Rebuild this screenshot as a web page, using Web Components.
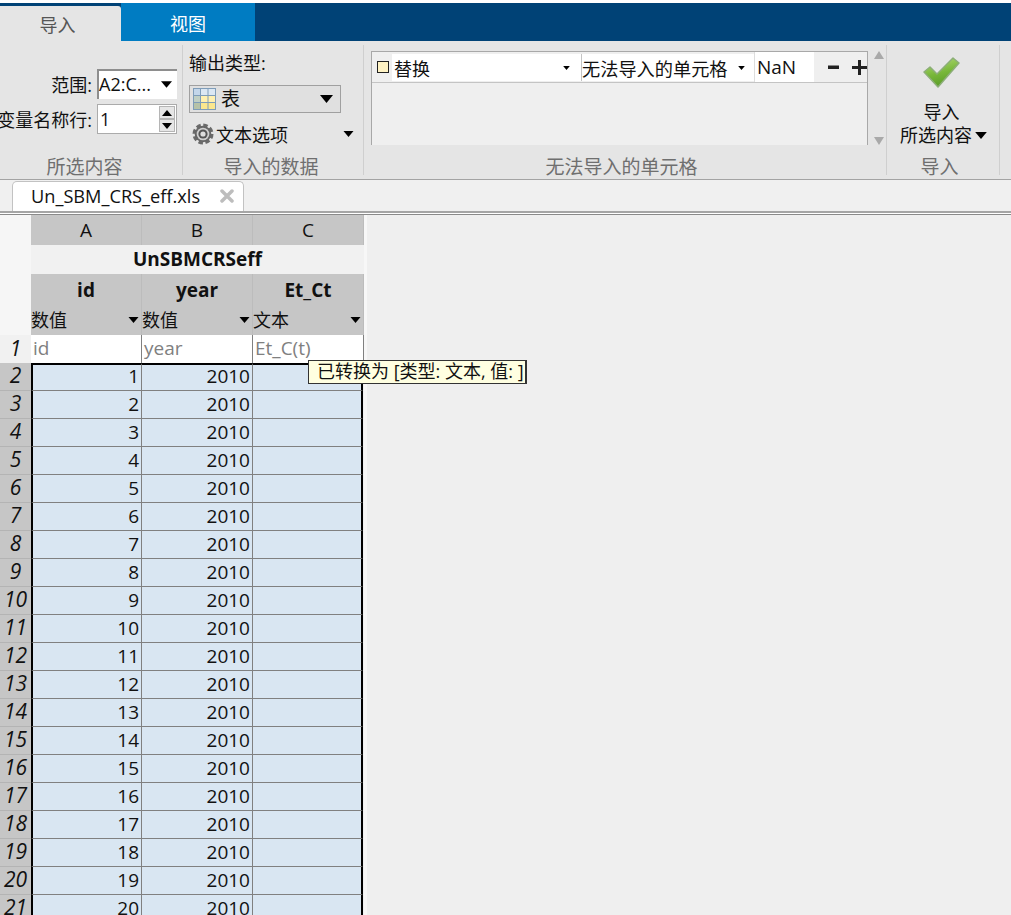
<!DOCTYPE html>
<html lang="zh">
<head>
<meta charset="utf-8">
<title>导入</title>
<style>
  html, body { margin: 0; height: 915px; overflow: hidden; background: #fff; }
  body { font-family: "Open Sans", "Noto Sans CJK SC", sans-serif; font-size: 18px; color: #111; }
</style>
</head>
<body>
<app-tabs></app-tabs>
<app-ribbon>
  <ribbon-group label="所选内容" style="width:183px;--label-pad:14px"><selection-panel></selection-panel></ribbon-group>
  <ribbon-group label="导入的数据" style="width:181px;--label-pad:5px"><output-panel></output-panel></ribbon-group>
  <ribbon-group label="无法导入的单元格" style="width:523px;--label-pad:8px"><rules-panel></rules-panel></ribbon-group>
  <ribbon-group label="导入" style="width:113px;--label-pad:8px"><import-button></import-button></ribbon-group>
</app-ribbon>
<file-strip name="Un_SBM_CRS_eff.xls"></file-strip>
<import-sheet></import-sheet>

<script>
const caret = (w, h) =>
  `<svg width="${w}" height="${h}" viewBox="0 0 10 6" aria-hidden="true"><path d="M0 0h10L5 6z" fill="#000"/></svg>`;

function define(tag, html) {
  const template = document.createElement("template");
  template.innerHTML = html;
  customElements.define(tag, class extends HTMLElement {
    constructor() {
      super();
      this.attachShadow({ mode: "open" });
      this.shadowRoot.appendChild(template.content.cloneNode(true));
    }
  });
}

define("app-tabs", `
  <style>
    :host { display: flex; height: 38px; margin-top: 3px; background: #004276; }
    div { display: flex; align-items: center; justify-content: center; box-sizing: border-box; }
    .on { width: 121px; margin-top: 3px; background: #e5e5e5; color: #555; border-top-right-radius: 3px; padding-right: 6px; }
    .off { width: 134px; background: #007cc2; color: #fff; padding-top: 2px; }
  </style>
  <div class="on">导入</div>
  <div class="off">视图</div>
`);

define("app-ribbon", `
  <style>
    :host { display: flex; height: 138px; background: #e5e5e5; border-bottom: 1px solid #a3a3a3; }
  </style>
  <slot></slot>
`);

class RibbonGroup extends HTMLElement {
  constructor() {
    super();
    this.attachShadow({ mode: "open" });
    this.shadowRoot.innerHTML = `
      <style>
        :host {
          display: block; box-sizing: border-box; height: 134px; margin-top: 4px;
          background: linear-gradient(#cfcfcf, #cfcfcf) right top / 1px 130px no-repeat;
          overflow: hidden;
        }
        .body { height: 111px; }
        .label { height: 22px; line-height: 22px; text-align: center; color: #6f6f6f; font-size: 19px; padding-right: var(--label-pad, 0); white-space: nowrap; }
      </style>
      <div class="body"><slot></slot></div>
      <div class="label"></div>`;
    this.shadowRoot.querySelector(".label").textContent = this.getAttribute("label");
  }
}
customElements.define("ribbon-group", RibbonGroup);

define("selection-panel", `
  <style>
    :host { display: flex; flex-direction: column; gap: 5px; padding: 24px 6px 0 0; }
    .row { display: flex; justify-content: flex-end; align-items: center; gap: 5px; height: 30px; white-space: nowrap; }
    .row span { flex-shrink: 0; }
    .box { box-sizing: border-box; width: 80px; height: 30px; flex-shrink: 0; background: #fff; display: flex; align-items: center; padding-left: 2px; }
    .range { border-top: 2px solid #8e8e8e; border-left: 2px solid #8e8e8e; justify-content: space-between; padding: 0 5px 2px 0; }
    .spin { border: 1px solid #ababab; padding: 0 0 0 2px; justify-content: space-between; }
    .arrows { display: flex; flex-direction: column; gap: 0; width: 16px; height: 26px; margin-right: 1px; }
    .arrows i { flex: 1; display: flex; align-items: center; justify-content: center; background: #e6e6e6; border: 1px solid #b5b5b5; }
  </style>
  <div class="row"><span>范围:</span><div class="box range"><span>A2:C...</span>${caret(11, 7)}</div></div>
  <div class="row"><span>变量名称行:</span><div class="box spin"><span>1</span>
    <div class="arrows"><i><svg width="10" height="6" viewBox="0 0 10 6"><path d="M0 6h10L5 0z"/></svg></i><i>${caret(10, 6)}</i></div>
  </div></div>
`);

define("output-panel", `
  <style>
    :host { display: block; padding: 5px 0 0 6px; }
    .title { height: 26px; line-height: 26px; margin-bottom: 9px; }
    .combo { box-sizing: border-box; width: 152px; height: 28px; border: 1px solid #a0a0a0; background: #e0e0e0; display: flex; align-items: center; padding: 0 7px 0 3px; }
    .combo svg:first-child { margin-right: 5px; }
    .combo b { font-weight: 400; flex: 1; font-size: 19px; padding-bottom: 2px; }
    .opts { display: flex; align-items: center; height: 26px; margin-top: 8px; padding-left: 3px; width: 162px; }
    .opts span { flex: 1; margin-left: 2px; }
  </style>
  <div class="title">输出类型:</div>
  <div class="combo">
    <svg width="23" height="22" viewBox="0 0 23 22" aria-hidden="true">
      <rect width="23" height="22" fill="#7f9db9"/>
      <rect x="1" y="1" width="6" height="6" fill="#c3d6ea"/><rect x="8" y="1" width="6.500" height="6" fill="#dbe7f3"/><rect x="15.500" y="1" width="6.500" height="6" fill="#dbe7f3"/>
      <rect x="1" y="8" width="6" height="6" fill="#c0cfc4"/><rect x="8" y="8" width="6.500" height="6" fill="#fff0b0"/><rect x="15.500" y="8" width="6.500" height="6" fill="#fff0b0"/>
      <rect x="1" y="15" width="6" height="6" fill="#b6c2a8"/><rect x="8" y="15" width="6.500" height="6" fill="#fbe78e"/><rect x="15.500" y="15" width="6.500" height="6" fill="#fbe78e"/>
    </svg>
    <b>表</b>${caret(13, 8)}
  </div>
  <div class="opts">
    <svg width="22" height="22" viewBox="0 0 22 22" aria-hidden="true">
      <circle cx="11" cy="11" r="9" fill="none" stroke="#6a6a6a" stroke-width="3" stroke-dasharray="4.500 2.570"/>
      <circle cx="11" cy="11" r="8.300" fill="#666"/>
      <circle cx="11" cy="11" r="6.300" fill="#cfcfcf"/>
      <circle cx="11" cy="11" r="4.600" fill="#555"/>
      <circle cx="11" cy="11" r="2.600" fill="#dedede"/>
    </svg>
    <span>文本选项</span>${caret(11, 6)}
  </div>
`);

define("rules-panel", `
  <style>
    :host { display: flex; padding: 6px 0 0 7px; gap: 0; }
    .panel { box-sizing: border-box; width: 497px; height: 94px; border: 1px solid #a8a8a8; border-bottom: 0; background: #efefef; }
    .row { display: flex; height: 31px; box-sizing: border-box; border-bottom: 1px solid #c4c4c4; align-items: stretch; }
    .swatch { width: 20px; box-sizing: border-box; padding-left: 5px; display: flex; align-items: center; }
    .swatch i { display: block; box-sizing: border-box; width: 12px; height: 12px; background: #fff3c4; border: 1px solid #222; }
    .cell { background: #fff; margin: 2px 0 1px; display: flex; align-items: center; white-space: nowrap; }
    .rule { width: 190px; justify-content: space-between; padding: 0 11px 0 2px; box-sizing: border-box; border-right: 1px solid #c4c4c4; }
    .what { width: 172px; justify-content: space-between; padding-right: 9px; box-sizing: border-box; font-size: 18.200px; }
    .nan { width: 60px; margin: 0; padding-left: 2px; box-sizing: border-box; border-left: 1px solid #ddd; font-size: 19px; }
    .ops { flex: 1; display: flex; align-items: center; justify-content: flex-end; gap: 12px; }
    .scroll { width: 18px; display: flex; flex-direction: column; justify-content: space-between; align-items: center; height: 94px; padding-left: 3px; box-sizing: border-box; }
  </style>
  <div class="panel">
    <div class="row">
      <div class="swatch"><i></i></div>
      <div class="cell rule"><span>替换</span>${caret(7, 4)}</div>
      <div class="cell what"><span>无法导入的单元格</span>${caret(7, 4)}</div>
      <div class="cell nan">NaN</div>
      <div class="ops">
        <svg width="13" height="14" viewBox="0 0 13 14" aria-hidden="true"><path d="M1 5.500h11v3.500H1z" fill="#222"/></svg>
        <svg width="15" height="15" viewBox="0 0 15 15" aria-hidden="true"><path d="M6 0h3v6h6v3H9v6H6V9H0V6h6z" fill="#222"/></svg>
      </div>
    </div>
  </div>
  <div class="scroll">
    <svg width="10" height="8" viewBox="0 0 10 8"><path d="M0 8h10L5 0z" fill="#a9a9a9"/></svg>
    <svg width="10" height="8" viewBox="0 0 10 8"><path d="M0 0h10L5 8z" fill="#a9a9a9"/></svg>
  </div>
`);

define("import-button", `
  <style>
    :host { display: flex; flex-direction: column; align-items: center; padding: 12px 4px 0 0; line-height: 23px; }
    svg.tick { margin-bottom: 13px; display: block; }
    .more { display: flex; align-items: center; gap: 3px; margin-left: 4px; }
  </style>
  <svg class="tick" width="37" height="31" viewBox="0 0 37 31" aria-hidden="true">
    <defs><linearGradient id="g" x1="0" y1="0" x2="0.300" y2="1"><stop offset="0" stop-color="#b9dd7c"/><stop offset="0.600" stop-color="#78b73a"/><stop offset="1" stop-color="#5d9f2a"/></linearGradient></defs>
    <path d="M1 15l6-5 7 7L30 1l6 5-21 24z" fill="url(#g)" stroke="#8cae78" stroke-width="1.500" stroke-linejoin="round"/>
  </svg>
  <div>导入</div>
  <div class="more">所选内容${caret(12, 7)}</div>
`);

class FileStrip extends HTMLElement {
  constructor() {
    super();
    this.attachShadow({ mode: "open" });
    this.shadowRoot.innerHTML = `
      <style>
        :host { display: flex; box-sizing: border-box; height: 33px; padding: 1px 0 0 12px; background: #f0f0f0; border-bottom: 2px solid #a5a5a5; }
        .tab { box-sizing: border-box; width: 232px; height: 30px; background: #fff; border: 1px solid #c2c2c2; border-bottom: 0; border-radius: 5px 5px 0 0; display: flex; align-items: center; padding: 0 9px 2px 18px; justify-content: space-between; font-size: 18.200px; }
      </style>
      <div class="tab"><span></span>
        <svg width="14" height="14" viewBox="0 0 14 14" aria-hidden="true"><path d="M2 2l10 10M12 2L2 12" stroke="#bdbdbd" stroke-width="3.500" stroke-linecap="round"/></svg>
      </div>`;
    this.shadowRoot.querySelector("span").textContent = this.getAttribute("name");
  }
}
customElements.define("file-strip", FileStrip);

class ImportSheet extends HTMLElement {
  constructor() {
    super();
    this.attachShadow({ mode: "open" });
    let rows = "";
    for (let n = 2; n <= 22; n++) {
      rows += `<div class="num">${n}</div><div class="d a${n === 2 ? " first" : ""}">${n - 1}</div><div class="d${n === 2 ? " first" : ""}">2010</div><div class="d c${n === 2 ? " first" : ""}"></div>`;
    }
    this.shadowRoot.innerHTML = `
      <style>
        :host {
          display: block; height: 702px; padding-top: 2px; position: relative; overflow: hidden;
          background:
            linear-gradient(#fff 1px, #8a8a8a 1px, #8a8a8a 2px, transparent 2px),
            linear-gradient(90deg, transparent 364px, #f7f7f7 364px, #f7f7f7 367px, transparent 367px),
            #efefef;
        }
        .grid { display: grid; width: 364px; grid-template-columns: 31px 111px 111px 111px; grid-template-rows: 30px 29px 33px 28px 28px; grid-auto-rows: 28px; line-height: 1; font-size: 19px; }
        .grid > div { box-sizing: border-box; display: flex; align-items: center; white-space: nowrap; }
        .corner { grid-row: 1 / 5; background: #f6f6f6; }
        .h { background: #c6c6c6; justify-content: center; border-right: 1px solid #bcbcbc; }
        .name { grid-column: 2 / 5; background: #f1f1f1; justify-content: center; font-weight: 700; padding-bottom: 1px; }
        .f { background: #c6c6c6; justify-content: center; font-weight: 700; border-right: 1px solid #bcbcbc; }
        .t { background: #c6c6c6; justify-content: space-between; padding-right: 2px; padding-bottom: 2px; border-right: 1px solid #bcbcbc; font-size: 18px; }
        .num { background: #c6c6c6; justify-content: center; font-style: italic; font-size: 21px; padding-bottom: 3px; border-bottom: 1px solid #b4b4b4; }
        .num.top { background: #f1f1f1; border: 0; padding-bottom: 2px; }
        .p { background: #fff; color: #808080; padding: 0 0 1px 2px; border-right: 1px solid #808080; }
        .d { background: #d9e6f2; justify-content: flex-end; padding: 0 2px 1px 0; border-right: 1px solid #808080; border-bottom: 1px solid #808080; }
        .d.a { border-left: 2px solid #000; }
        .d.c { border-right: 2px solid #000; margin-right: 1px; }
        .d.first { border-top: 2px solid #000; padding-bottom: 3px; }
        .tip { position: absolute; left: 308px; top: 147px; height: 24px; box-sizing: border-box; width: 219px; background: #ffffe1; border: 1px solid #333; border-right-width: 2px; padding-left: 8px; line-height: 21px; white-space: nowrap; }
      </style>
      <div class="grid">
        <div class="corner"></div>
        <div class="h">A</div><div class="h">B</div><div class="h">C</div>
        <div class="name">UnSBMCRSeff</div>
        <div class="f">id</div><div class="f">year</div><div class="f">Et_Ct</div>
        <div class="t">数值${caret(11, 6)}</div><div class="t">数值${caret(11, 6)}</div><div class="t">文本${caret(11, 6)}</div>
        <div class="num top">1</div><div class="p">id</div><div class="p">year</div><div class="p">Et_C(t)</div>
        ${rows}
      </div>
      <div class="tip">已转换为 [类型: 文本, 值: ]</div>`;
  }
}
customElements.define("import-sheet", ImportSheet);
</script>
</body>
</html>
